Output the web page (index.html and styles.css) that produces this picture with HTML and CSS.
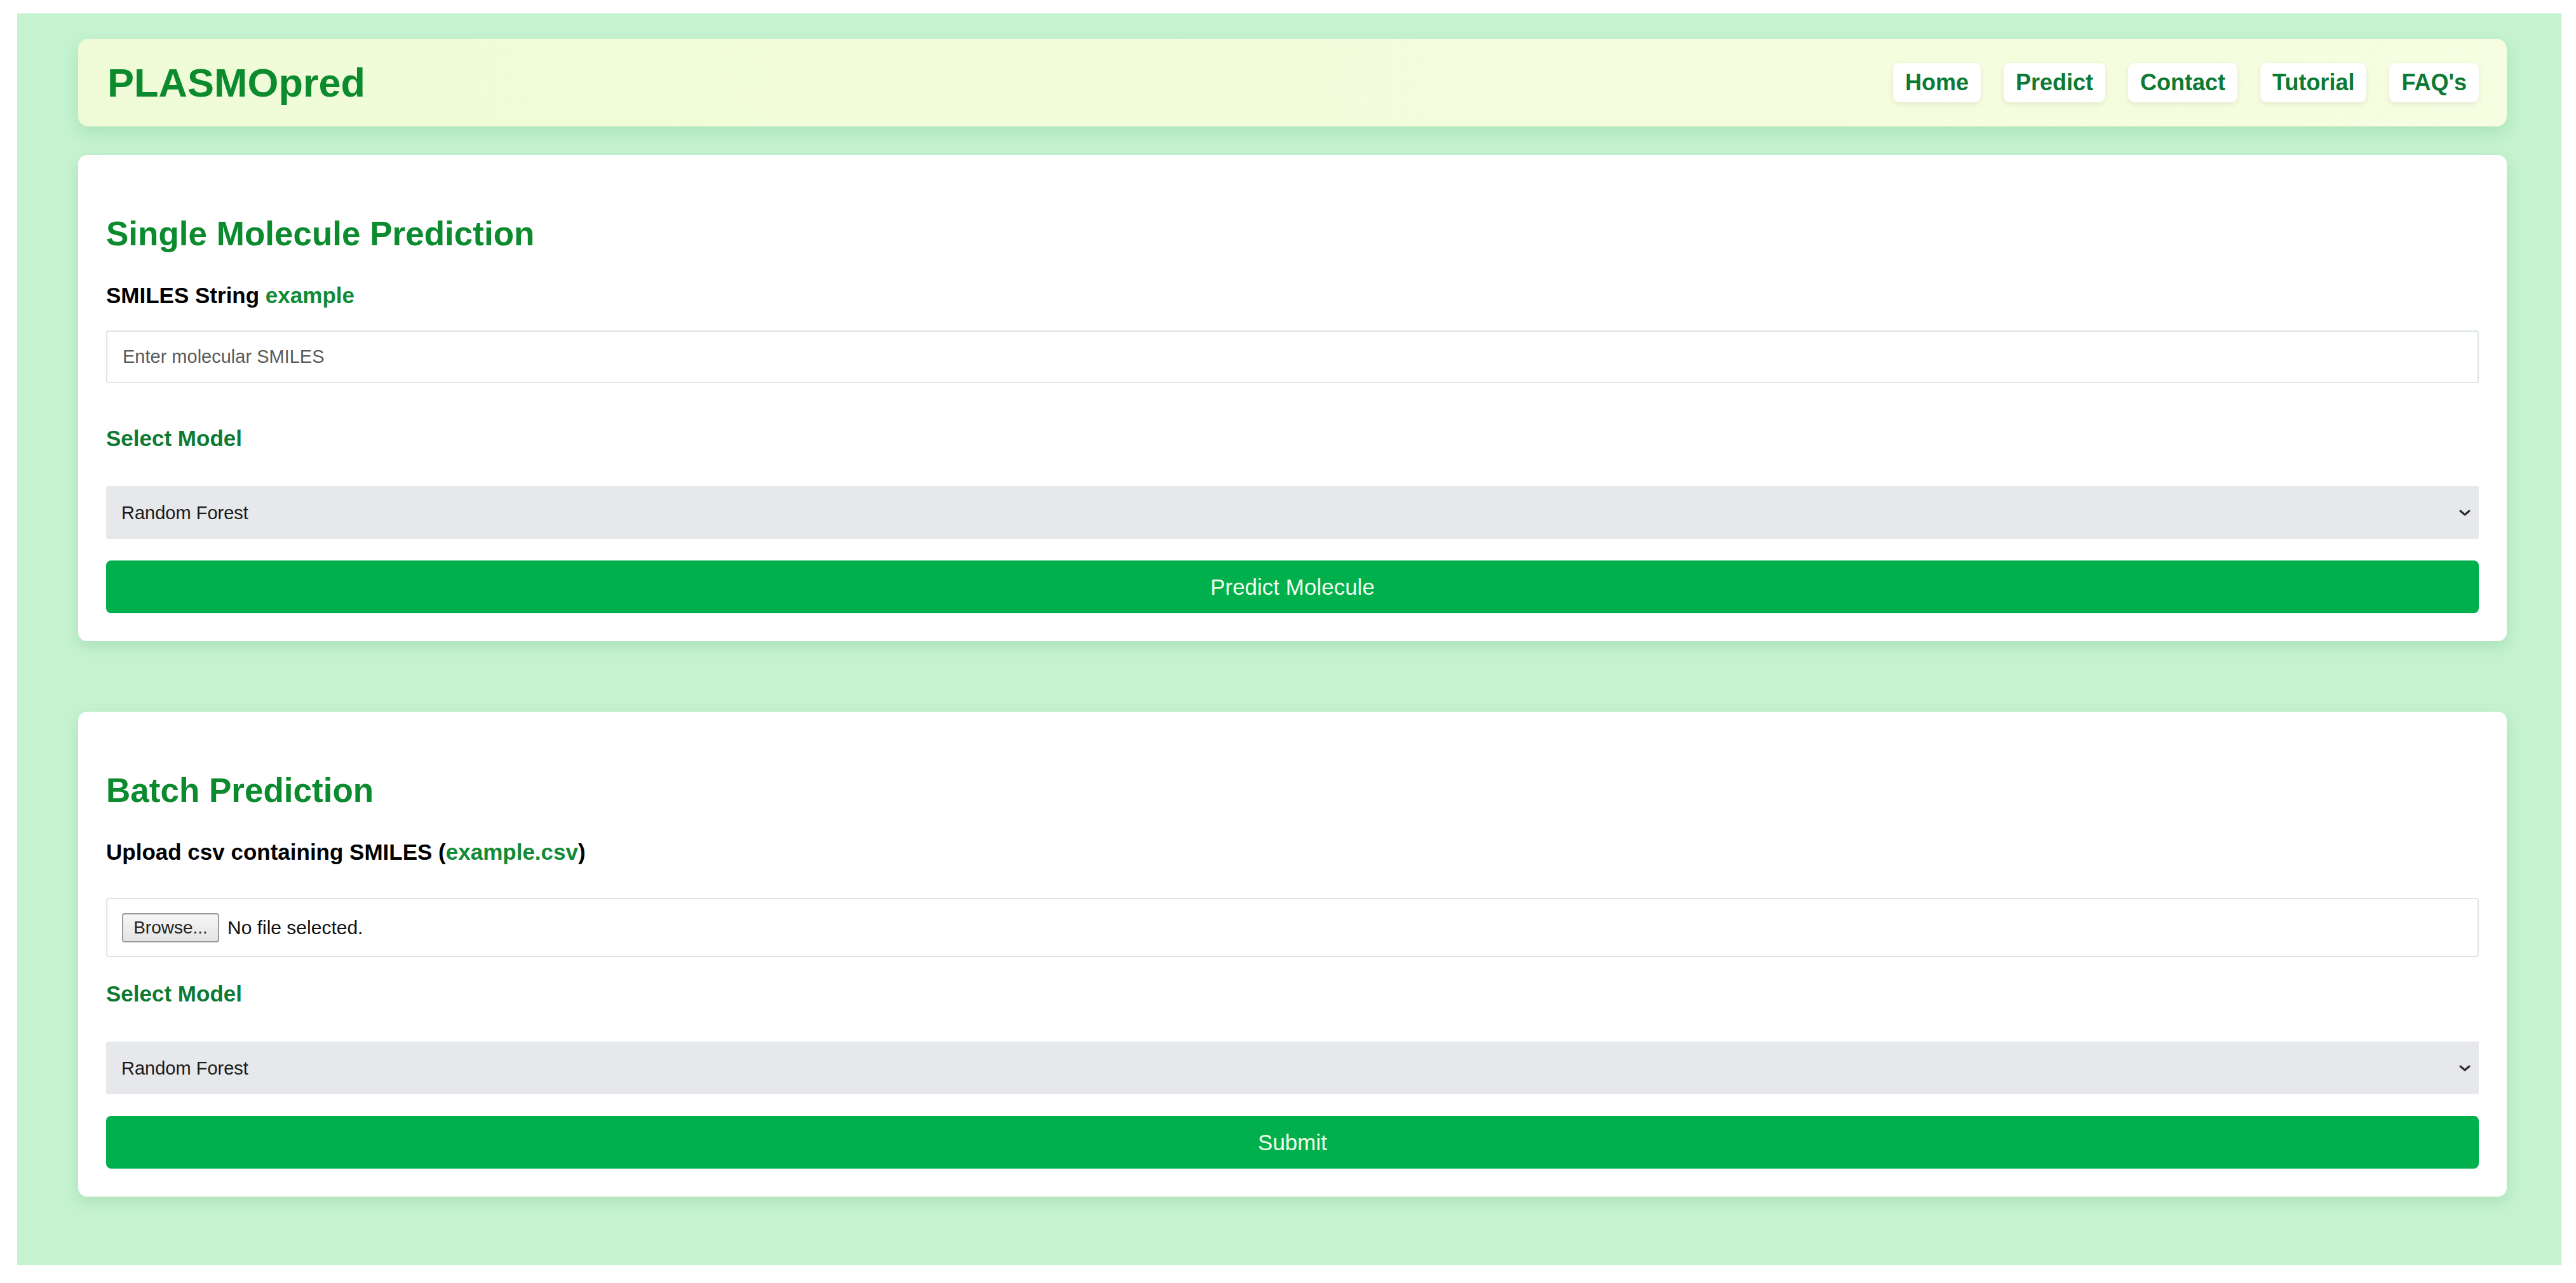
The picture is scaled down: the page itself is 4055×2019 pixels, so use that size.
FILE: index.html
```html
<!DOCTYPE html>
<html lang="en">
<head>
    <meta charset="UTF-8">
    <meta name="viewport" content="width=device-width, initial-scale=1.0">
    <title>PLASMOpred - Predict</title>
    <link rel="stylesheet" href="styles.css">
</head>
<body>
    <div class="page">
        <header class="topbar">
            <div class="logo">PLASMOpred</div>
            <nav class="nav">
                <a href="#">Home</a>
                <a href="#">Predict</a>
                <a href="#">Contact</a>
                <a href="#">Tutorial</a>
                <a href="#">FAQ's</a>
            </nav>
        </header>

        <section class="card">
            <h2>Single Molecule Prediction</h2>
            <label class="field-label" for="smiles">SMILES String <a href="#">example</a></label>
            <input type="text" id="smiles" class="text-input" placeholder="Enter molecular SMILES">

            <label class="model-label" for="model-single">Select Model</label>
            <div class="select-wrap">
                <select id="model-single" class="model-select">
                    <option>Random Forest</option>
                </select>
                <svg class="chevron" viewBox="0 0 18 10" width="18" height="10">
                    <path d="M2 2 L9 8 L16 2" fill="none" stroke="#2d2a30" stroke-width="3" stroke-linecap="round" stroke-linejoin="round"/>
                </svg>
            </div>

            <button class="submit-button">Predict Molecule</button>
        </section>

        <section class="card">
            <h2>Batch Prediction</h2>
            <label class="field-label" for="csv-file">Upload csv containing SMILES (<a href="#">example.csv</a>)</label>
            <label class="file-box">
                <span class="browse">Browse...</span>
                <span class="file-name">No file selected.</span>
                <input type="file" id="csv-file" accept=".csv" hidden>
            </label>

            <label class="model-label" for="model-batch">Select Model</label>
            <div class="select-wrap">
                <select id="model-batch" class="model-select">
                    <option>Random Forest</option>
                </select>
                <svg class="chevron" viewBox="0 0 18 10" width="18" height="10">
                    <path d="M2 2 L9 8 L16 2" fill="none" stroke="#2d2a30" stroke-width="3" stroke-linecap="round" stroke-linejoin="round"/>
                </svg>
            </div>

            <button class="submit-button">Submit</button>
        </section>
    </div>
</body>
</html>
```

FILE: styles.css
```css
body {
    margin: 0;
    padding: 21px 23px 26px 27px;
    background: #fff;
    font-family: "Liberation Sans", Arial, sans-serif;
}
.page {
    background: #c5f3cf;
    padding: 40px 86px 108px 96px;
}
.topbar {
    display: flex;
    align-items: center;
    justify-content: space-between;
    box-sizing: border-box;
    height: 138px;
    padding: 0 44px 0 46px;
    background: linear-gradient(90deg, #effbd6, #f6fde0);
    border-radius: 16px;
    box-shadow: 0 10px 26px rgba(40, 140, 70, 0.16);
}
.logo {
    font-size: 63px;
    font-weight: bold;
    color: #0b8a2e;
}
.nav {
    display: flex;
    gap: 36px;
}
.nav a {
    display: block;
    height: 62px;
    line-height: 62px;
    padding: 0 19px;
    font-size: 36px;
    font-weight: bold;
    color: #0c7a33;
    background: #fff;
    border-radius: 10px;
    text-decoration: none;
    box-shadow: 0 3px 8px rgba(0, 0, 0, 0.08);
}
.card {
    background: #fff;
    border-radius: 14px;
    padding: 52px 44px 44px;
    margin-top: 45px;
    box-shadow: 0 8px 22px rgba(30, 120, 60, 0.15);
}
.card + .card {
    margin-top: 111px;
}
.card h2 {
    font-size: 53px;
    line-height: 60px;
    margin: 42px 0 47px;
    color: #0b8a2e;
}
.field-label {
    display: block;
    font-size: 35px;
    line-height: 40px;
    font-weight: bold;
    color: #000;
}
.field-label a {
    color: #118a36;
    text-decoration: none;
}
.text-input {
    display: block;
    width: 100%;
    height: 83px;
    box-sizing: border-box;
    margin-top: 35px;
    padding: 0 24px;
    border: 2px solid #dde5ea;
    border-radius: 4px;
    font-family: "Liberation Sans", Arial, sans-serif;
    font-size: 29px;
    color: #222;
}
.text-input::placeholder {
    color: #5a5a5a;
}
.model-label {
    display: block;
    margin-top: 67px;
    font-size: 35px;
    line-height: 40px;
    font-weight: bold;
    color: #0d7a32;
}
.file-box + .model-label {
    margin-top: 38px;
}
.select-wrap {
    position: relative;
    margin-top: 55px;
}
.model-select {
    display: block;
    width: 100%;
    height: 83px;
    padding: 0 24px;
    border: none;
    border-radius: 3px;
    background: #e6e8eb;
    font-family: "Liberation Sans", Arial, sans-serif;
    font-size: 29px;
    color: #1a1a1a;
    appearance: none;
    -webkit-appearance: none;
}
.chevron {
    position: absolute;
    right: 13px;
    top: 37px;
}
.submit-button {
    display: block;
    width: 100%;
    height: 83px;
    margin-top: 34px;
    border: none;
    border-radius: 8px;
    background: #00b04c;
    color: #f2fdec;
    font-family: "Liberation Sans", Arial, sans-serif;
    font-size: 35px;
    cursor: pointer;
}
.file-box {
    display: flex;
    align-items: center;
    gap: 13px;
    box-sizing: border-box;
    height: 93px;
    margin-top: 52px;
    padding: 0 23px;
    border: 2px solid #dde5ea;
    border-radius: 4px;
    font-size: 30px;
    color: #111;
    cursor: pointer;
}
.browse {
    display: block;
    width: 153px;
    height: 46px;
    line-height: 42px;
    box-sizing: border-box;
    text-align: center;
    border: 2px solid #9a9a9a;
    border-radius: 4px;
    background: linear-gradient(#f6f6f6, #e4e4e4);
    font-size: 28px;
    color: #222;
}
```
